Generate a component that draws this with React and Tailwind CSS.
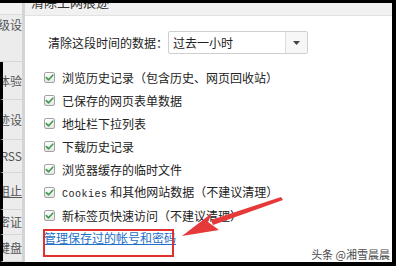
import React from "react";

const CJK = { fontFamily: '"Noto Sans CJK SC", "Noto Sans", sans-serif' };

function Check() {
  return (
    <span className="flex h-[11px] w-[11px] shrink-0 items-center justify-center rounded-[2px] border border-[#a3a3a3] bg-gradient-to-b from-white to-[#e6e6e6]">
      <svg width="9" height="9" viewBox="0 0 9 9">
        <path d="M1.3 4.6 L3.6 6.8 L7.8 2.2" fill="none" stroke="#3c9b4a" strokeWidth="1.6" strokeLinecap="round" strokeLinejoin="round" />
      </svg>
    </span>
  );
}

function Row({ children }) {
  return (
    <div className="flex h-[23px] items-center gap-[7px]">
      <Check />
      <span className="whitespace-nowrap text-[12px] leading-none text-[#222]">{children}</span>
    </div>
  );
}

const side = [
  { t: "高级设", h: "h-[47px]", al: "items-start pt-[4px]" },
  { t: "体验", h: "h-[38px]", al: "items-center" },
  { t: "痕迹设", h: "h-[40px]", al: "items-center" },
  { t: "RSS", h: "h-[33px]", al: "items-center" },
  { t: "阻止", h: "h-[37px]", al: "items-center", u: true },
  { t: "密证", h: "h-[25px]", al: "items-center" },
  { t: "键盘", h: "h-[27px]", al: "items-center" },
];

export default function App() {
  return (
    <div className="relative h-[266px] w-[396px] overflow-hidden bg-black pb-[4px] pr-[4px] pt-[3px]" style={CJK}>
      <div className="flex h-full w-full">
        {/* left sidebar */}
        <div className="flex w-[22px] shrink-0 flex-col overflow-hidden bg-[#ececec]">
          <div className="h-[12px] shrink-0 border-b border-[#dcdcdc] bg-[#f2f2f2]" />
          {side.map((s, i) => (
            <div
              key={i}
              className={`flex shrink-0 justify-end overflow-hidden border-b border-[#d6d6d6] ${s.h} ${s.al} ${i > 0 ? "border-l-[3px] border-l-black" : ""}`}
            >
              <span className={`whitespace-nowrap text-[12px] leading-none text-[#555] ${s.u ? "underline" : ""}`}>{s.t}</span>
            </div>
          ))}
        </div>

        {/* dialog */}
        <div className="flex flex-1 flex-col border-l-[3px] border-[#d4d4d4] bg-white">
          <div className="h-[13px] shrink-0 overflow-hidden border-b border-[#e2e2e2] bg-[#f1f1f1] pl-[6px]">
            <div className="-mt-[8px] whitespace-nowrap text-[13px] leading-[14px] text-[#333]">清除上网痕迹</div>
          </div>

          <div className="flex flex-col pl-[19px]">
            <div className="mt-[15px] flex h-[23px] items-center pl-[4px]">
              <span className="w-[120px] whitespace-nowrap text-[12px] leading-none text-[#222]">清除这段时间的数据：</span>
              <div className="flex h-[23px] w-[140px] items-stretch rounded-[2px] border border-[#cfcfcf] bg-white">
                <span className="flex flex-1 items-center pl-[4px] text-[12px] leading-none text-[#222]">过去一小时</span>
                <span className="flex w-[22px] items-center justify-center border-l border-[#dedede] bg-[#f7f7f7]">
                  <svg width="7" height="4" viewBox="0 0 7 4"><path d="M0 0 H7 L3.5 4 Z" fill="#444" /></svg>
                </span>
              </div>
            </div>

            <div className="mt-[12px] flex flex-col">
              <Row>浏览历史记录（包含历史、网页回收站）</Row>
              <Row>已保存的网页表单数据</Row>
              <Row>地址栏下拉列表</Row>
              <Row>下载历史记录</Row>
              <Row>浏览器缓存的临时文件</Row>
              <Row>
                <span className="text-[10px] tracking-[0.5px] text-[#222]" style={{ fontFamily: '"Liberation Mono", monospace' }}>Cookies</span>
                <span> 和其他网站数据（不建议清理）</span>
              </Row>
              <Row>新标签页快速访问（不建议清理）</Row>
              <div className="flex h-[22px] items-center">
                <span className="whitespace-nowrap text-[12px] leading-none text-[#1d6fc8] underline">管理保存过的帐号和密码</span>
              </div>
            </div>
          </div>
        </div>
      </div>

      {/* annotations */}
      <div className="pointer-events-none absolute left-[43px] top-[229px] h-[28px] w-[131px] border-2 border-[#e0312f]" />
      <svg className="pointer-events-none absolute left-0 top-0" width="396" height="266" viewBox="0 0 396 266">
        <path d="M281 197 L283 200 L213 225 L211 220 Z" fill="#e5393a" />
        <path d="M182 236 L212 213 L208 222 L219 230 Z" fill="#e5393a" />
      </svg>
      <div className="absolute bottom-[6px] right-[6px] whitespace-nowrap bg-white pl-[2px] text-[11px] leading-none text-[#4a4a4a]">
        头条 @湘雪晨晨
      </div>
    </div>
  );
}
